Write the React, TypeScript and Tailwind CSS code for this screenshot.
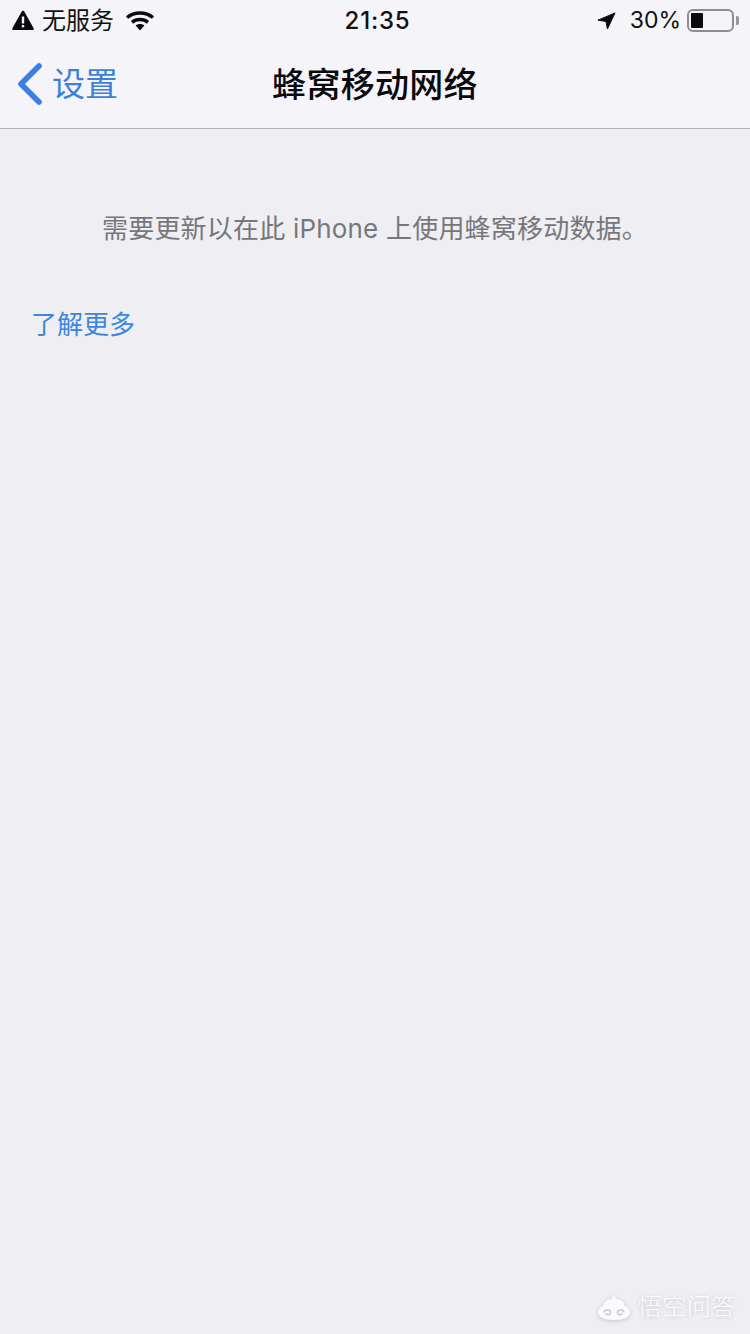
const CJK = "font-['Inter','Noto_Sans_CJK_SC',sans-serif]";

function WarningIcon() {
  return (
    <svg width="22" height="21" viewBox="0 0 22 21" className="shrink-0">
      <path d="M11 2 L20.5 18.8 H1.5 Z" fill="#0b0b0d" stroke="#0b0b0d" strokeWidth="2.6" strokeLinejoin="round" />
      <rect x="9.8" y="6.5" width="2.4" height="7" fill="#f4f4f8" />
      <rect x="9.8" y="15" width="2.4" height="2.4" fill="#f4f4f8" />
    </svg>
  );
}

function WifiIcon() {
  return (
    <svg width="28" height="20" viewBox="0 0 28 20" className="shrink-0">
      <path d="M1 6.6 C8 0.4 20 0.4 27 6.6" fill="none" stroke="#0b0b0d" strokeWidth="3.4" />
      <path d="M6 11.4 C10.5 7.6 17.5 7.6 22 11.4" fill="none" stroke="#0b0b0d" strokeWidth="3.4" />
      <path d="M9.6 14.4 C12 12.4 16 12.4 18.4 14.4 L14 19.4 Z" fill="#0b0b0d" />
    </svg>
  );
}

function StatusBar() {
  return (
    <div className="flex h-[41px] items-center pl-3 pr-[11px] text-[#111113]">
      <div className="flex flex-1 items-center">
        <WarningIcon />
        <span className="ml-[8px] text-[24px] leading-none">无服务</span>
        <span className="ml-3 flex"><WifiIcon /></span>
      </div>
      <div className="pl-[4px] text-[24px] font-medium leading-none tracking-[0.8px]">21:35</div>
      <div className="flex flex-1 items-center justify-end">
        <svg width="19" height="18" viewBox="0 0 20 19" className="shrink-0">
          <path d="M19 1 L1 8.6 L9.4 10 L11 18 Z" fill="#0b0b0d" stroke="#0b0b0d" strokeLinejoin="round" />
        </svg>
        <span className="ml-[14px] text-[23px] leading-none">30%</span>
        <div className="ml-[6px] flex h-[23px] w-[47px] items-center rounded-[6px] border-2 border-[#8e8e92] p-[2px]">
          <div className="h-full w-[12px] rounded-[1px] bg-[#0b0b0d]" />
        </div>
        <div className="ml-[2px] h-[9px] w-[3px] rounded-r-[2px] bg-[#97979b]" />
      </div>
    </div>
  );
}

function NavBar() {
  return (
    <div className="relative flex h-[88px] items-center justify-center border-b border-[#b2b2b6]">
      <div className="absolute left-[17px] top-[22px] flex items-center text-[#3d7fdc]">
        <svg width="26" height="42" viewBox="0 0 26 42" className="shrink-0">
          <path d="M22 3 L4 21 L22 39" fill="none" stroke="#3b7fe4" strokeWidth="5.6" strokeLinecap="round" strokeLinejoin="round" />
        </svg>
        <span className="ml-[9px] text-[33px] leading-none">设置</span>
      </div>
      <div className="text-[34px] font-medium leading-none tracking-[0.3px] text-[#0a0a0c]">蜂窝移动网络</div>
    </div>
  );
}

export default function App() {
  return (
    <div className={`${CJK} relative flex h-[1334px] w-[750px] flex-col overflow-hidden bg-[#eeeef3]`}>
      <div className="bg-[#f5f5f9]">
        <StatusBar />
        <NavBar />
      </div>
      <p className="mt-[83px] text-center text-[26px] leading-[34px] tracking-[0.2px] text-[#77777b]">
        需要更新以在此 iPhone 上使用蜂窝移动数据。
      </p>
      <p className="mt-[62px] pl-[31px] text-[26px] leading-[34px] text-[#3c86de]">了解更多</p>
      {/* watermark */}
      <div className="absolute bottom-[13px] right-[14px] flex items-center text-[#fbfbfd] drop-shadow-[0_1px_2px_rgba(0,0,0,0.18)]">
        <svg width="34" height="28" viewBox="0 0 34 28" className="shrink-0">
          <path d="M17 1 L19.5 6 C24 6.5 27 9 27.5 12.5 C31 14 33 16.5 33 19.5 C33 24 27 27 17 27 C7 27 1 24 1 19.5 C1 16.5 3 14 6.5 12.5 C7 9 10 6.5 14.5 6 Z" fill="#fbfbfd" />
          <path d="M7 19.5 C7 16 13.5 16 13.5 19.5 C13.5 22.5 9 22.5 9 20" fill="none" stroke="#c9c9ce" strokeWidth="1.5" />
          <path d="M27 19.5 C27 16 20.5 16 20.5 19.5 C20.5 22.5 25 22.5 25 20" fill="none" stroke="#c9c9ce" strokeWidth="1.5" />
        </svg>
        <span className="ml-[7px] text-[24px] font-light leading-none tracking-[0.6px]">悟空问答</span>
      </div>
    </div>
  );
}
